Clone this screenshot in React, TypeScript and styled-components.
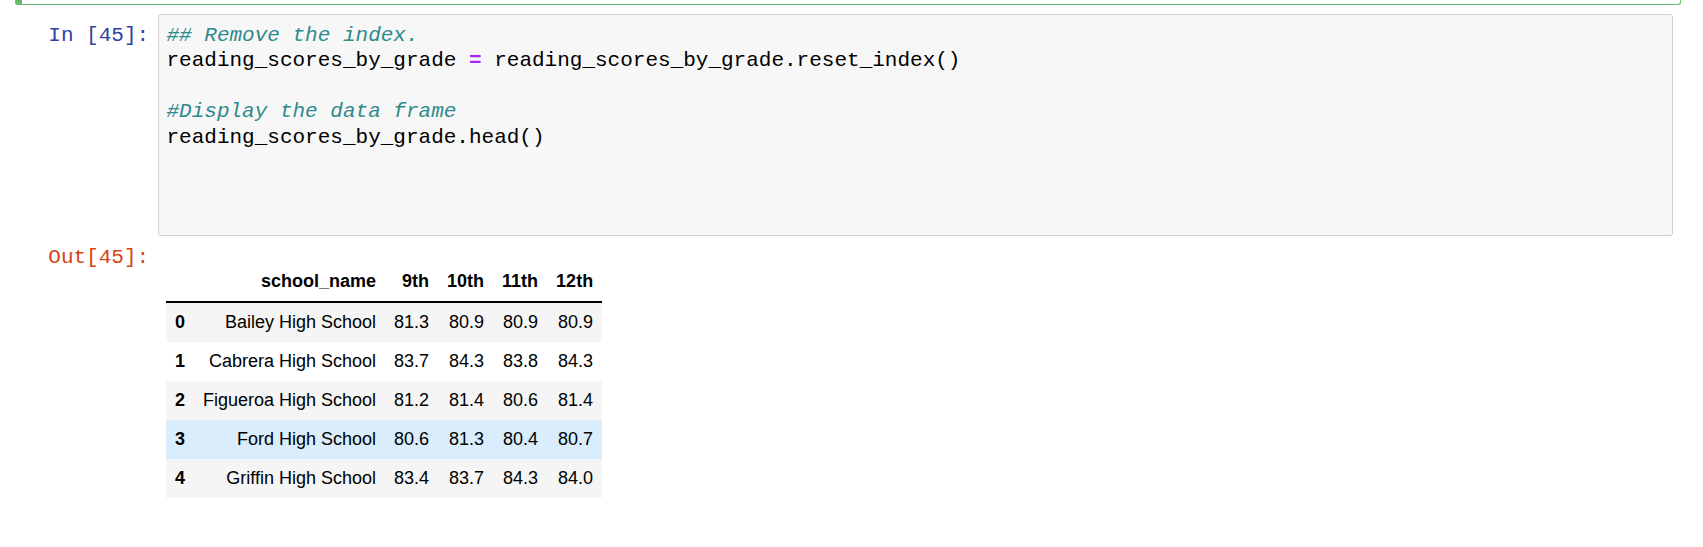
import React from "react";
import styled, { createGlobalStyle } from "styled-components";

const GlobalStyle = createGlobalStyle`
  html, body {
    margin: 0;
    padding: 0;
    background: #ffffff;
  }
  body {
    font-family: "Liberation Sans", Arial, sans-serif;
    color: #000;
  }
`;

const Notebook = styled.div`
  width: 1683px;
  box-sizing: border-box;
  padding: 0 2px 0 15px;
  display: flex;
  flex-direction: column;
`;

const PrevCell = styled.div`
  height: 4px;
  border: 1px solid #66bb6a;
  border-top: none;
  border-radius: 0 0 3px 3px;
  background: linear-gradient(
    to right,
    #66bb6a 0,
    #66bb6a 6px,
    transparent 6px,
    transparent 100%
  );
`;

const Cell = styled.div`
  border: 1px solid transparent;
  padding: 7.5px;
  display: flex;
  flex-direction: column;
`;

const Row = styled.div`
  display: flex;
  align-items: flex-start;
`;

const Prompt = styled.div<{ $color: string }>`
  flex: 0 0 134px;
  box-sizing: border-box;
  padding: 8.4px;
  border-top: 1px solid transparent;
  font-family: "Liberation Mono", "Courier New", monospace;
  font-size: 21px;
  line-height: 25.5px;
  text-align: right;
  white-space: pre;
  color: ${(p) => p.$color};
`;

const InputArea = styled.div`
  flex: 1;
  border: 1px solid #cfcfcf;
  border-radius: 3px;
  background: #f7f7f7;
  padding: 8px 0;
`;

const CodeLine = styled.div`
  height: 25.5px;
  padding: 0 8px;
  font-family: "Liberation Mono", "Courier New", monospace;
  font-size: 21px;
  line-height: 25.5px;
  white-space: pre;
  color: #000;
`;

const Comment = styled.span`
  color: #2e8b8b;
  font-style: italic;
`;

const Operator = styled.span`
  color: #aa22ff;
  font-weight: bold;
`;

const OutputSubarea = styled.div`
  flex: 1;
  padding: 8.4px;
`;

const Table = styled.table`
  margin-top: 18px;
  border-collapse: collapse;
  border-spacing: 0;
  border: none;
  font-family: "Liberation Sans", Arial, sans-serif;
  font-size: 18px;
  color: #000;
`;

const THead = styled.thead`
  border-bottom: 2px solid #000;
  vertical-align: bottom;
`;

const HeadCell = styled.th`
  padding: 9px;
  text-align: right;
  vertical-align: middle;
  font-weight: bold;
  line-height: normal;
  white-space: nowrap;
`;

const BodyRow = styled.tr<{ $odd: boolean; $hover?: boolean }>`
  background: ${(p) =>
    p.$hover ? "#d9edfd" : p.$odd ? "#f5f5f5" : "transparent"};
`;

const IndexCell = styled.th`
  padding: 9px;
  text-align: right;
  vertical-align: middle;
  font-weight: bold;
  line-height: normal;
`;

const DataCell = styled.td`
  padding: 9px;
  text-align: right;
  vertical-align: middle;
  line-height: normal;
  white-space: nowrap;
`;

const columns = ["school_name", "9th", "10th", "11th", "12th"];

const rows: string[][] = [
  ["Bailey High School", "81.3", "80.9", "80.9", "80.9"],
  ["Cabrera High School", "83.7", "84.3", "83.8", "84.3"],
  ["Figueroa High School", "81.2", "81.4", "80.6", "81.4"],
  ["Ford High School", "80.6", "81.3", "80.4", "80.7"],
  ["Griffin High School", "83.4", "83.7", "84.3", "84.0"],
];

export default function App() {
  return (
    <>
      <GlobalStyle />
      <Notebook>
        <PrevCell />
        <Cell>
          <Row>
            <Prompt $color="#303f9f">In [45]:</Prompt>
            <InputArea>
              <CodeLine>
                <Comment>## Remove the index.</Comment>
              </CodeLine>
              <CodeLine>
                reading_scores_by_grade <Operator>=</Operator>{" "}
                reading_scores_by_grade.reset_index()
              </CodeLine>
              <CodeLine />
              <CodeLine>
                <Comment>#Display the data frame</Comment>
              </CodeLine>
              <CodeLine>reading_scores_by_grade.head()</CodeLine>
              <CodeLine />
              <CodeLine />
              <CodeLine />
            </InputArea>
          </Row>
          <Row>
            <Prompt $color="#d84315">Out[45]:</Prompt>
            <OutputSubarea>
              <Table>
                <THead>
                  <tr>
                    <HeadCell />
                    {columns.map((c) => (
                      <HeadCell key={c}>{c}</HeadCell>
                    ))}
                  </tr>
                </THead>
                <tbody>
                  {rows.map((r, i) => (
                    <BodyRow key={i} $odd={i % 2 === 0} $hover={i === 3}>
                      <IndexCell>{i}</IndexCell>
                      {r.map((v, j) => (
                        <DataCell key={j}>{v}</DataCell>
                      ))}
                    </BodyRow>
                  ))}
                </tbody>
              </Table>
            </OutputSubarea>
          </Row>
        </Cell>
      </Notebook>
    </>
  );
}
